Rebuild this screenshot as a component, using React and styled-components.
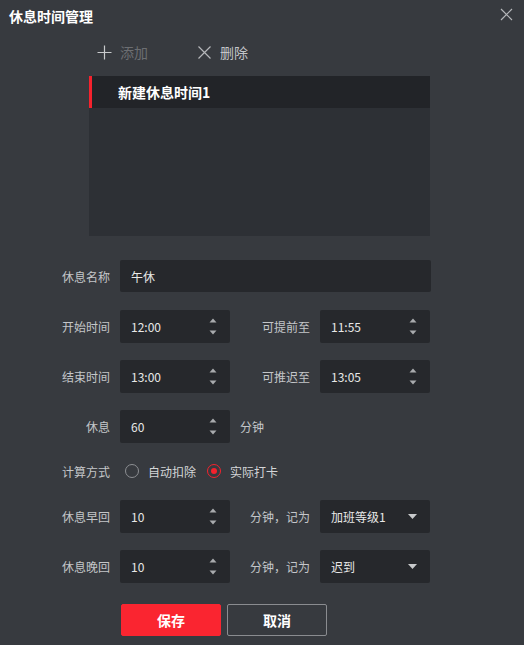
import React from "react";
import styled, { createGlobalStyle } from "styled-components";

const Global = createGlobalStyle`
  html, body { margin: 0; padding: 0; background: #373a3f; }
  body { font-family: "Noto Sans CJK SC", "Microsoft YaHei", "Noto Sans", sans-serif; }
  * { box-sizing: border-box; }
`;

const Dialog = styled.div`
  width: 524px;
  height: 645px;
  background: #373a3f;
  color: #e6e6e6;
  position: relative;
  overflow: hidden;
`;

const Header = styled.div`
  height: 31px;
  display: flex;
  align-items: center;
  justify-content: space-between;
  padding: 0 11px 0 9px;
`;

const Title = styled.div`
  font-size: 14px;
  font-weight: 700;
  color: #ffffff;
  line-height: 20px;
`;

const CloseBtn = styled.div`
  width: 13px;
  height: 13px;
  display: flex;
  margin-top: -2px;
`;

const Toolbar = styled.div`
  display: flex;
  align-items: center;
  height: 30px;
  margin-top: 6px;
  padding-left: 97px;
`;

const ToolBtn = styled.div`
  display: flex;
  align-items: center;
  gap: 8px;
  width: 100px;
  font-size: 14px;
  color: ${(p) => (p.$disabled ? "#6c6e72" : "#c3c5c8")};
  svg { flex: none; }
`;

const ListBox = styled.div`
  margin: 9px 0 0 89px;
  width: 341px;
  height: 160px;
  background: #2d3035;
`;

const ListItem = styled.div`
  height: 32px;
  background: #222428;
  border-left: 3px solid #f5222d;
  display: flex;
  align-items: center;
  padding-left: 26px;
  font-size: 14px;
  font-weight: 700;
  color: #ffffff;
`;

const Form = styled.div`
  margin-top: 23px;
  display: flex;
  flex-direction: column;
  gap: 16px;
`;

const Row = styled.div`
  display: flex;
  align-items: center;
  height: ${(p) => (p.$short ? "24px" : "34px")};
`;

const Label = styled.div`
  width: ${(p) => p.$w || 120}px;
  flex: none;
  text-align: right;
  padding-right: 10px;
  font-size: 12px;
  color: #c4c6c9;
  white-space: nowrap;
`;

const Field = styled.div`
  width: ${(p) => p.$w || 110}px;
  height: ${(p) => p.$h || 33}px;
  flex: none;
  background: #26282c;
  border-radius: 2px;
  display: flex;
  align-items: center;
  justify-content: space-between;
  padding: 0 13px 0 11px;
  font-size: 12px;
  color: #e8e8e8;
`;

const Spin = styled.div`
  display: flex;
  flex-direction: column;
  gap: 7px;
`;

const Unit = styled.div`
  font-size: 12px;
  color: #c4c6c9;
  margin-left: 10px;
`;

const RadioGroup = styled.div`
  display: flex;
  align-items: center;
`;

const RadioItem = styled.div`
  display: flex;
  align-items: center;
  gap: 9px;
  margin-left: 5px;
  margin-right: 6px;
  font-size: 12px;
  color: #d4d6d8;
`;

const RadioCircle = styled.span`
  width: 14px;
  height: 14px;
  border-radius: 50%;
  border: 1px solid ${(p) => (p.$on ? "#f5222d" : "#8d8f93")};
  display: flex;
  align-items: center;
  justify-content: center;
  &::after {
    content: "";
    width: 6px;
    height: 6px;
    border-radius: 50%;
    background: ${(p) => (p.$on ? "#f5222d" : "transparent")};
  }
`;

const Buttons = styled.div`
  display: flex;
  gap: 6px;
  margin: 21px 0 0 121px;
`;

const Button = styled.div`
  width: 100px;
  height: 32px;
  border-radius: 2px;
  display: flex;
  align-items: center;
  justify-content: center;
  font-size: 14px;
  font-weight: 700;
  color: #ffffff;
  background: ${(p) => (p.$primary ? "#fa2530" : "transparent")};
  border: 1px solid ${(p) => (p.$primary ? "#fa2530" : "#8a8c90")};
`;

const Spinner = () => (
  <Spin>
    <svg width="8" height="5" viewBox="0 0 8 5"><path d="M4 0.5 L7.5 4.5 L0.5 4.5 Z" fill="#a9abae" /></svg>
    <svg width="8" height="5" viewBox="0 0 8 5"><path d="M0.5 0.5 L7.5 0.5 L4 4.5 Z" fill="#a9abae" /></svg>
  </Spin>
);

const Caret = () => (
  <svg width="9" height="5" viewBox="0 0 9 5"><path d="M0 0 L9 0 L4.5 5 Z" fill="#c8cacc" /></svg>
);

const NumField = ({ value, w }) => (
  <Field $w={w}>
    <span>{value}</span>
    <Spinner />
  </Field>
);

const SelectField = ({ value }) => (
  <Field $w={110}>
    <span>{value}</span>
    <Caret />
  </Field>
);

export default function App() {
  return (
    <>
      <Global />
      <Dialog>
        <Header>
          <Title>休息时间管理</Title>
          <CloseBtn>
            <svg width="13" height="13" viewBox="0 0 13 13">
              <path d="M1 1 L12 12 M12 1 L1 12" stroke="#b5b7ba" strokeWidth="1.2" />
            </svg>
          </CloseBtn>
        </Header>
        <Toolbar>
          <ToolBtn $disabled>
            <svg width="15" height="15" viewBox="0 0 15 15">
              <path d="M7.5 0.5 V14.5 M0.5 7.5 H14.5" stroke="#c8cacc" strokeWidth="1.2" />
            </svg>
            添加
          </ToolBtn>
          <ToolBtn>
            <svg width="15" height="15" viewBox="0 0 15 15">
              <path d="M1.5 1.5 L13.5 13.5 M13.5 1.5 L1.5 13.5" stroke="#b5b7ba" strokeWidth="1.2" />
            </svg>
            删除
          </ToolBtn>
        </Toolbar>
        <ListBox>
          <ListItem>新建休息时间1</ListItem>
        </ListBox>
        <Form>
          <Row>
            <Label>休息名称</Label>
            <Field $w={311} $h={32}>午休</Field>
          </Row>
          <Row>
            <Label>开始时间</Label>
            <NumField value="12:00" />
            <Label $w={90}>可提前至</Label>
            <NumField value="11:55" />
          </Row>
          <Row>
            <Label>结束时间</Label>
            <NumField value="13:00" />
            <Label $w={90}>可推迟至</Label>
            <NumField value="13:05" />
          </Row>
          <Row>
            <Label>休息</Label>
            <NumField value="60" />
            <Unit>分钟</Unit>
          </Row>
          <Row $short>
            <Label>计算方式</Label>
            <RadioGroup>
              <RadioItem><RadioCircle />自动扣除</RadioItem>
              <RadioItem><RadioCircle $on />实际打卡</RadioItem>
            </RadioGroup>
          </Row>
          <Row>
            <Label>休息早回</Label>
            <NumField value="10" />
            <Label $w={90}>分钟，记为</Label>
            <SelectField value="加班等级1" />
          </Row>
          <Row>
            <Label>休息晚回</Label>
            <NumField value="10" />
            <Label $w={90}>分钟，记为</Label>
            <SelectField value="迟到" />
          </Row>
        </Form>
        <Buttons>
          <Button $primary>保存</Button>
          <Button>取消</Button>
        </Buttons>
      </Dialog>
    </>
  );
}
